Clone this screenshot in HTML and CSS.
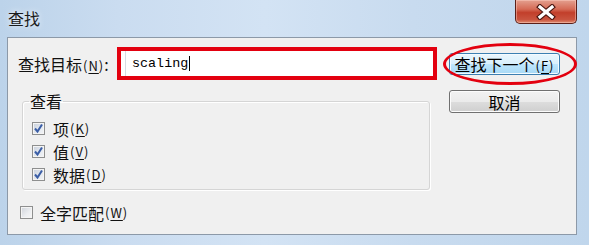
FILE: index.html
```html
<!DOCTYPE html>
<html lang="zh-CN">
<head>
<meta charset="utf-8">
<title>查找</title>
<link rel="stylesheet" href="styles.css">
</head>
<body>
<div class="window">
  <div class="titlebar">
    <span class="title">查找</span>
    <button class="close" aria-label="关闭">
      <svg width="20" height="16" viewBox="0 0 20 16">
        <path d="M4 3 L16 13 M16 3 L4 13" stroke="#4a1610" stroke-width="5.5" stroke-linecap="square"/>
        <path d="M4 3 L16 13 M16 3 L4 13" stroke="#ffffff" stroke-width="3.2" stroke-linecap="square"/>
      </svg>
    </button>
  </div>
  <div class="client">
    <div class="main">
      <div class="row-target">
        <label class="target-label">查找目标<span class="acc">(<u>N</u>)</span>:</label>
        <div class="mark-box">
          <div class="edit"><span class="edit-text">scaling</span><span class="caret"></span></div>
        </div>
      </div>
      <fieldset class="group">
        <legend>查看</legend>
        <div class="check"><span class="cb on"><svg width="11" height="11" viewBox="0 0 11 11"><path d="M2 5.5 L4.5 8.5 L9 1.5" fill="none" stroke="#3b5ea6" stroke-width="2"/></svg></span>项<span class="acc">(<u>K</u>)</span></div>
        <div class="check"><span class="cb on"><svg width="11" height="11" viewBox="0 0 11 11"><path d="M2 5.5 L4.5 8.5 L9 1.5" fill="none" stroke="#3b5ea6" stroke-width="2"/></svg></span>值<span class="acc">(<u>V</u>)</span></div>
        <div class="check"><span class="cb on"><svg width="11" height="11" viewBox="0 0 11 11"><path d="M2 5.5 L4.5 8.5 L9 1.5" fill="none" stroke="#3b5ea6" stroke-width="2"/></svg></span>数据<span class="acc">(<u>D</u>)</span></div>
      </fieldset>
      <div class="check whole"><span class="cb"></span>全字匹配<span class="acc">(<u>W</u>)</span></div>
    </div>
    <div class="buttons">
      <button class="btn focus">查找下一个<span class="acc">(<u>F</u>)</span></button>
      <button class="btn cancel">取消</button>
    </div>
  </div>
  <div class="ellipse"></div>
</div>
</body>
</html>
```
FILE: styles.css
```css
* { box-sizing: border-box; }
html, body { margin: 0; padding: 0; }
body {
  width: 589px;
  height: 245px;
  overflow: hidden;
  font-family: "Noto Sans CJK SC", "Noto Sans", sans-serif;
  font-size: 16px;
  color: #111;
  background: #c2d7ed;
}
.window {
  position: relative;
  width: 589px;
  height: 245px;
  padding: 0 12px 10px 7px;
  background: linear-gradient(to right, #bcd3ea 0%, #cadcf0 20%, #d3e3f4 45%, #c8dbef 70%, #c0d6ec 100%);
  display: flex;
  flex-direction: column;
}
.titlebar {
  height: 37px;
  display: flex;
  justify-content: space-between;
  align-items: flex-start;
}
.title {
  padding: 7px 0 0 1px;
  line-height: 22px;
  font-size: 16px;
  color: #1b1b1b;
  text-shadow: 0 0 6px rgba(255,255,255,0.9);
}
.close {
  width: 62px;
  height: 24px;
  margin: 0;
  padding: 0;
  border: 1px solid #5b1f18;
  border-top: none;
  border-radius: 0 0 5px 5px;
  background: linear-gradient(to bottom, #e4a08f 0%, #d56a55 40%, #c23f2b 55%, #c9543f 85%, #e08c70 100%);
  box-shadow: inset 0 0 0 1px rgba(255,210,200,0.45);
  display: flex;
  align-items: center;
  justify-content: center;
}
.client {
  flex: 1;
  background: #f0f0f0;
  border: 1px solid #8c99a8;
  display: flex;
  gap: 12px;
  padding: 9px 16px 0 10px;
}
.main {
  width: 419px;
  display: flex;
  flex-direction: column;
}
.acc {
  font-size: 13px;
  letter-spacing: 1px;
  margin-left: 1px;
}
.acc u { text-underline-offset: 2px; }
.row-target {
  height: 33px;
  display: flex;
  align-items: center;
}
.target-label {
  width: 99px;
  flex: none;
  white-space: nowrap;
}
.mark-box {
  width: 320px;
  height: 33px;
  border: 4px solid #e3000f;
  background: #fff;
  padding: 0 0 0 4px;
}
.edit {
  height: 100%;
  border-left: 1px solid #d6dbe2;
  padding-left: 6px;
  display: flex;
  align-items: center;
}
.edit-text {
  font-family: "Liberation Mono", monospace;
  font-size: 13.4px;
  color: #000;
}
.caret {
  width: 1px;
  height: 15px;
  background: #000;
  margin-left: 1px;
}
.group {
  margin: 11px 0 0 4px;
  width: 408px;
  padding: 6px 0 3px 9px;
  border: 1px solid #d5d5d5;
  border-radius: 3px;
  box-shadow: inset 1px 1px 0 #fff, 1px 1px 0 #fff;
  min-width: 0;
}
.group legend {
  margin-left: -3px;
  padding: 0 1px;
  line-height: 20px;
}
.check {
  height: 23px;
  display: flex;
  align-items: center;
  white-space: nowrap;
}
.cb {
  width: 13px;
  height: 13px;
  flex: none;
  margin-right: 8px;
  border: 1px solid #8e8f8f;
  background: linear-gradient(135deg, #cfd3da 0%, #eceef1 60%, #f6f6f6 100%);
  box-shadow: inset 0 0 0 1px #f4f4f4;
  display: flex;
  align-items: center;
  justify-content: center;
}
.cb.on {
  background: linear-gradient(135deg, #c8d0dc 0%, #e6eaf0 60%, #f2f4f6 100%);
}
.whole {
  margin: 11px 0 0 2px;
}
.whole .cb { margin-right: 7px; }
.buttons {
  width: 111px;
  margin-top: 6px;
  display: flex;
  flex-direction: column;
  gap: 15px;
}
.btn {
  margin: 0;
  padding: 0;
  font-family: inherit;
  font-size: 16px;
  line-height: 1;
  color: #000;
  white-space: nowrap;
  border: 1px solid #707070;
  border-radius: 3px;
  background: linear-gradient(to bottom, #f2f2f2 0%, #ebebeb 50%, #dddddd 51%, #cfcfcf 100%);
  box-shadow: inset 0 0 0 1px #fcfcfc;
}
.btn.focus {
  height: 22px;
  border-color: #3c7fb1;
  background: linear-gradient(to bottom, #eaf6fd 0%, #d9f0fc 50%, #bee6fd 51%, #a7d9f5 100%);
  box-shadow: inset 0 0 0 1px #f4fbff;
}
.btn.cancel { height: 23px; }
.ellipse {
  position: absolute;
  left: 443px;
  top: 43px;
  width: 134px;
  height: 42px;
  border: 3px solid #e3000f;
  border-radius: 50%;
  pointer-events: none;
}
```
